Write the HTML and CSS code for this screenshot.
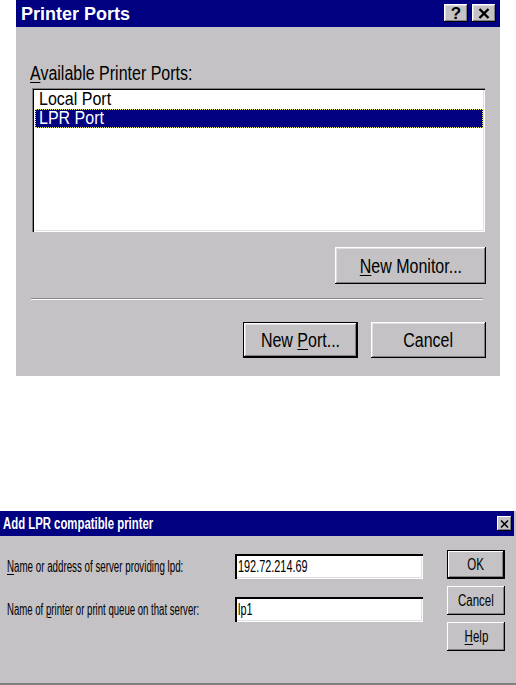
FILE: index.html
```html
<!DOCTYPE html>
<html>
<head>
<meta charset="utf-8">
<link rel="stylesheet" href="styles.css">
</head>
<body>
<div class="screen">
  <div class="dlg1">
    <div class="tbar1">
      <span class="ttl1">Printer Ports</span>
      <div class="tbtns">
        <div class="cap-btn"><span class="qm">?</span></div>
        <div class="cap-btn">
          <svg width="12" height="11" viewBox="0 0 12 11"><path d="M1.5 1 L10.5 10 M10.5 1 L1.5 10" stroke="#000" stroke-width="2.4" fill="none"/></svg>
        </div>
      </div>
    </div>
    <div class="body1">
      <div class="lbl1"><span class="sx"><u>A</u>vailable Printer Ports:</span></div>
      <div class="listbox">
        <div class="item"><span class="sxi">Local Port</span></div>
        <div class="item sel"><span class="sxi">LPR Port</span></div>
      </div>
      <div class="row-right">
        <div class="btn btn-mon"><span class="sx sxc"><u>N</u>ew Monitor...</span></div>
      </div>
      <div class="sep"></div>
      <div class="row-right actions">
        <div class="btn btn-wide default"><span class="sx sxc">New <u>P</u>ort...</span></div>
        <div class="btn btn-wide"><span class="sx sxc">Cancel</span></div>
      </div>
    </div>
  </div>

  <div class="dlg2">
    <div class="tbar2">
      <span class="ttl2">Add LPR compatible printer</span>
      <div class="cap-btn2">
        <svg width="9" height="8" viewBox="0 0 9 8"><path d="M1 0.5 L8 7.5 M8 0.5 L1 7.5" stroke="#000" stroke-width="1.5" fill="none"/></svg>
      </div>
    </div>
    <div class="body2">
      <div class="form">
        <div class="frow">
          <div class="flabel"><span class="nx"><u>N</u>ame or address of server providing lpd:</span></div>
          <div class="field"><span class="nx nxf">192.72.214.69</span></div>
        </div>
        <div class="frow">
          <div class="flabel"><span class="nx nx2">Name of <u>p</u>rinter or print queue on that server:</span></div>
          <div class="field"><span class="nx nxf">lp1</span></div>
        </div>
      </div>
      <div class="btncol">
        <div class="btn2 default2"><span class="nx nxb">OK</span></div>
        <div class="btn2"><span class="nx nxb">Cancel</span></div>
        <div class="btn2"><span class="nx nxb"><u>H</u>elp</span></div>
      </div>
    </div>
  </div>
</div>
</body>
</html>
```

FILE: styles.css
```css
* { box-sizing: border-box; }
body {
  margin: 0;
  background: #ffffff;
  font-family: "Liberation Sans", Arial, sans-serif;
  color: #000;
}
.screen { width: 516px; height: 685px; overflow: hidden; }

u { text-decoration: underline; text-underline-offset: 2px; text-decoration-thickness: 1px; }

.sx {
  display: inline-block;
  font-size: 20px;
  line-height: 20px;
  transform: scaleX(0.8);
  transform-origin: left center;
  white-space: nowrap;
}
.sxc { transform-origin: center center; }
.sxi {
  display: inline-block;
  font-size: 18px;
  line-height: 17px;
  transform: scaleX(0.89);
  transform-origin: left center;
  white-space: nowrap;
}

/* ---------- dialog 1 ---------- */
.dlg1 {
  margin-left: 16px;
  width: 484px;
  height: 376px;
  background: #c4c2c4;
  display: flex;
  flex-direction: column;
}
.tbar1 {
  height: 27px;
  background: #000080;
  display: flex;
  align-items: center;
  justify-content: space-between;
  padding-left: 5px;
  padding-right: 4px;
}
.ttl1 {
  color: #fff;
  font-weight: bold;
  font-size: 18px;
  line-height: 20px;
  margin-top: 1px;
}
.tbtns { display: flex; gap: 4px; margin-top: -1px; }
.cap-btn {
  width: 24px;
  height: 18px;
  background: #c4c2c4;
  box-shadow: inset -1px -1px #000, inset 1px 1px #fff, inset -2px -2px #808080, inset 2px 2px #dfdfdf;
  display: flex;
  align-items: center;
  justify-content: center;
}
.qm { font-weight: bold; font-size: 17px; line-height: 17px; }

.body1 {
  flex: 1;
  padding: 36px 14px 18px 14px;
  display: flex;
  flex-direction: column;
}
.lbl1 { height: 20px; margin-bottom: 5px; }
.listbox {
  margin-left: 2px;
  margin-right: 1px;
  height: 144px;
  background: #fff;
  padding: 2px;
  box-shadow: inset 1px 1px #808080, inset 2px 2px #000, inset -1px -1px #fff, inset -2px -2px #dfdfdf;
}
.item {
  height: 19px;
  padding-left: 5px;
  display: flex;
  align-items: center;
}
.item.sel {
  background: #000080;
  color: #fff;
  margin-left: 1px;
  padding-left: 3px;
  border: 1px dotted #f0f060;
}
.row-right { display: flex; justify-content: flex-end; }
.btn {
  background: #c4c2c4;
  box-shadow: inset -1px -1px #000, inset 1px 1px #fff, inset -2px -2px #808080, inset 2px 2px #dfdfdf;
  display: flex;
  align-items: center;
  justify-content: center;
}
.btn-mon { width: 151px; height: 37px; margin-top: 15px; }
.btn-wide { width: 115px; height: 36px; }
.default {
  border: 1px solid #000;
}
.sep {
  margin: 14px 3px 0 1px;
  height: 2px;
  border-top: 1px solid #8a888a;
  border-bottom: 1px solid #fff;
}
.actions { gap: 13px; margin-top: 22px; }

/* ---------- dialog 2 ---------- */
.dlg2 {
  margin-top: 135px;
  width: 516px;
  height: 174px;
  background: #c4c2c4;
  display: flex;
  flex-direction: column;
}
.tbar2 {
  height: 25px;
  margin-right: 2px;
  background: #000080;
  display: flex;
  align-items: center;
  justify-content: space-between;
  padding-left: 3px;
  padding-right: 2px;
}
.ttl2 {
  display: inline-block;
  color: #fff;
  font-weight: bold;
  font-size: 16px;
  line-height: 18px;
  transform: scaleX(0.71);
  transform-origin: left center;
  white-space: nowrap;
}
.cap-btn2 {
  width: 15px;
  height: 15px;
  background: #c4c2c4;
  box-shadow: inset -1px -1px #000, inset 1px 1px #fff, inset -2px -2px #808080;
  display: flex;
  align-items: center;
  justify-content: center;
}
.body2 {
  flex: 1;
  display: flex;
  padding: 14px 11px 0 7px;
  border-bottom: 2px solid #808080;
}
.nx {
  display: inline-block;
  font-size: 16px;
  line-height: 18px;
  transform: scaleX(0.61);
  transform-origin: left center;
  white-space: nowrap;
}
.nx2 { transform: scaleX(0.6); }
.nxf { transform: scaleX(0.68); }
.nxb { transform: scaleX(0.72); transform-origin: center center; }
.form {
  display: flex;
  flex-direction: column;
  gap: 18px;
  margin-top: 4px;
}
.frow { display: flex; align-items: center; height: 25px; }
.flabel { width: 228px; }
.field {
  width: 188px;
  height: 25px;
  background: #fff;
  padding-left: 3px;
  display: flex;
  align-items: center;
  box-shadow: inset 1px 1px #000, inset 2px 2px #000, inset -1px -1px #fff, inset -2px -2px #dfdfdf;
}
.btncol {
  margin-left: 24px;
  display: flex;
  flex-direction: column;
  gap: 7px;
}
.btn2 {
  width: 58px;
  height: 29px;
  background: #c4c2c4;
  box-shadow: inset -1px -1px #000, inset 1px 1px #fff, inset -2px -2px #808080;
  display: flex;
  align-items: center;
  justify-content: center;
}
.default2 {
  border: 1px solid #000;
}
```
